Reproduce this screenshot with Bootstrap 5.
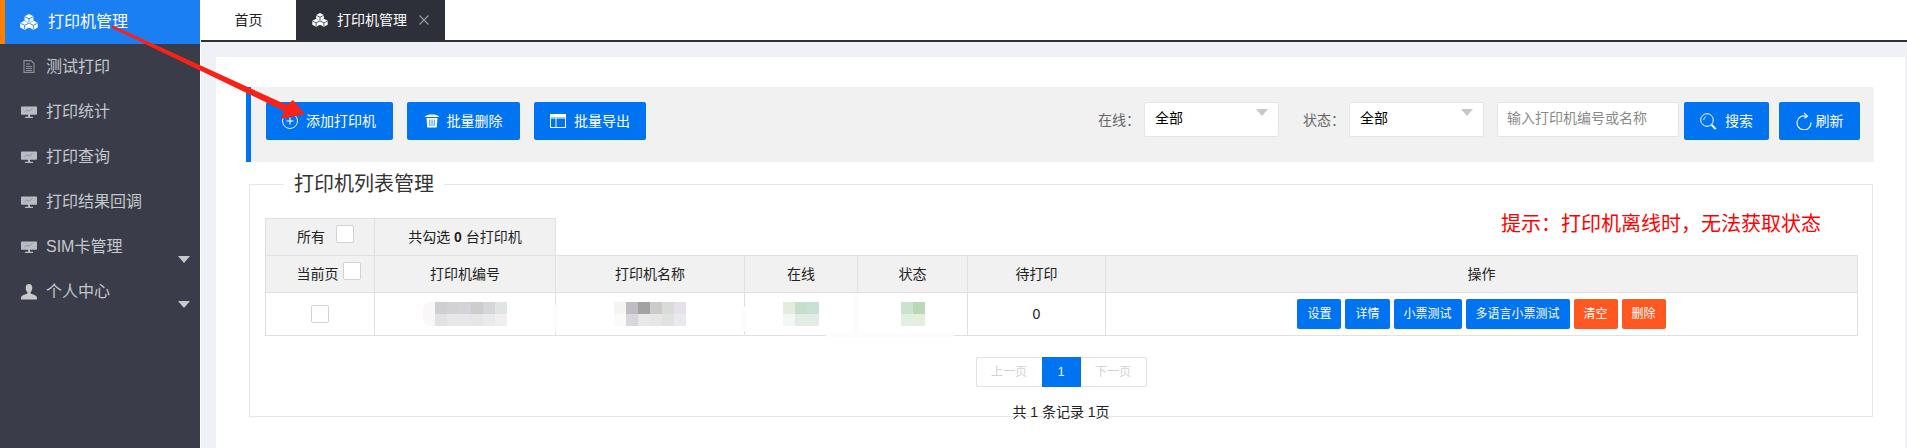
<!DOCTYPE html>
<html lang="zh-CN">
<head>
<meta charset="utf-8">
<title>打印机管理</title>
<link href="https://cdn.jsdelivr.net/npm/bootstrap@5.3.0/dist/css/bootstrap.min.css" rel="stylesheet">
<style>
html,body{height:448px;overflow:hidden}
body{font-family:"Liberation Sans","Noto Sans CJK SC",sans-serif;font-size:14px;color:#222;background:#fff;position:relative}
.shell{height:448px}
.sidebar{width:200px;flex:none;background:#3a3d49}
.side-item{height:45px;padding-left:21px;color:#c4c7cc;font-size:16px;position:relative;text-decoration:none}
.side-item .side-ic{width:16px;margin-right:9px;flex:none}
.side-item.on{height:44px;background:#1a7ff2;color:#fff;border-left:5px solid #ff8000;padding-left:15px}
.side-item.on .side-ic{width:18px;margin-right:10px}
.side-caret{position:absolute;right:10px;top:32px;border-style:solid;border-width:7px 6px 0;border-color:#c9c9c9 transparent transparent}
.mainwrap{min-width:0;border-left:1px solid #fff;background:#f0f1f6}
.tabbar{height:42px;background:#fff;border-bottom:2px solid #2e3039;flex:none}
.tab-item{height:40px;color:#222;text-decoration:none}
.tab-home{width:95px}
.tab-cur{width:149px;background:#2e3039;color:#fff;padding-left:15px}
.tab-close{margin-left:12px;color:#9a9ca3;line-height:0}
.panel-white{background:#fff;margin:15px 2px 0 15px;padding:30px 31px 0 30px;flex:1}
.toolbar{height:75px;background:#f1f1f1;border-left:5px solid #0073f0;padding:15px 14px 0 15px;border-radius:0 2px 2px 0}
.btn-main{height:38px;background:#0073f0;border:0;border-radius:2px;color:#fff;font-size:14px;padding:0;white-space:nowrap}
.btn-main:hover{background:#0073f0;color:#fff}
.btn-add{width:127px}.btn-del{width:113px}.btn-exp{width:112px}.btn-search{width:85px;margin-left:5px}.btn-refresh{width:81px;margin-left:10px}
.filter-label{color:#666;margin-right:5px;width:41px;white-space:nowrap}
.filter-sel.form-select{width:135px;height:35px;padding:0 0 3px 10px;border:1px solid #e6e6e6;border-radius:2px;font-size:14px;color:#000;background-color:#fff;background-position:right 10px top 6px;background-size:12px 7px;background-image:url("data:image/svg+xml,%3Csvg xmlns='http://www.w3.org/2000/svg' viewBox='0 0 12 7'%3E%3Cpath fill='%23c8c8c8' d='M0 0h12L6 7z'/%3E%3C/svg%3E")}
.filter-input.form-control{width:182px;height:35px;margin-left:13px;padding:0 9px 3px;border:1px solid #e6e6e6;border-radius:2px;font-size:14px}
.filter-input::placeholder{color:#8a8a8a}
.frame{border:1px solid #e6e6e6;margin:8px 1px 0 3px;padding:0 15px;height:247px}
.frame legend{float:none;width:auto;margin:0 0 0 19px;padding:0 10px;font-size:20px;line-height:28px;color:#333}
.ptable{table-layout:fixed;width:1592px;margin:20px 0 0;border-collapse:collapse;font-size:14px;text-align:center}
.ptable th,.ptable td{padding:0;border:1px solid #e0e0e0;vertical-align:middle;font-weight:400;color:#222}
.ptable th{background:#f1f1f1}
.ptable .head-row{height:37px}
.ptable .body-row{height:43px}
.ptable td.tip-cell{border-top-color:#fff;border-right-color:#fff;vertical-align:top;text-align:right;padding-right:36px}
.tip-text{display:block;color:#f00;font-size:20px;line-height:20px;margin-top:-5px}
.chk.form-check-input{width:18px;height:18px;margin:0;border:1px solid #d2d2d2;border-radius:2px;flex:none;float:none}
.chk-raise{margin-top:-6px !important}
.hd-sel{gap:11px;padding-left:11px}
.hd-sel2{gap:4px;padding-left:17px}
.mosaic{display:block;margin:0 auto}
.btn-op{height:30px;padding:0 10px;border:0;border-radius:2px;font-size:12px;color:#fff;background:#0073f0;white-space:nowrap}
.btn-op:hover{color:#fff;background:#0073f0}
.btn-op.warn,.btn-op.warn:hover{background:#ff5722}
.pager{margin:21px 0 0}
.pager .page-link{height:30px;line-height:28px;padding:0;font-size:12px;color:#d2d2d2;border-color:#e2e2e2;text-align:center;background:#fff}
.pager .page-item:first-child .page-link{width:67px;border-radius:2px 0 0 2px}
.pager .page-item:last-child .page-link{width:67px;border-radius:0 2px 2px 0}
.pager .page-item.active .page-link{width:39px;background:#0073f0;border-color:#0073f0;color:#fff}
.page-total{margin-top:15px;text-align:center;line-height:20px;color:#222}
.overlay{position:absolute;left:0;top:0;width:1907px;height:448px;pointer-events:none}
</style>
</head>
<body>
<svg width="0" height="0" class="d-block position-absolute">
  <defs>
    <symbol id="i-cubes" viewBox="0 0 18 16">
      <path d="M9 0l4.4 2.3v4.6L9 9.2 4.6 6.9V2.3z M4.6 6.6L9 8.9v4.5l-4.4 2.4L0.2 13.4V8.9z M13.4 6.6l4.4 2.3v4.5l-4.4 2.4L9 13.4V8.9z" fill="currentColor" fill-rule="evenodd"/>
      <path d="M4.6 2.6L9 4.8l4.4-2.2M9 4.8V8 M.4 9.2l4.2 2.1 4.2-2.1M4.6 11.3v3.5M9.2 9.2l4.2 2.1 4.2-2.1M13.4 11.3v3.5" fill="none" stroke="var(--cut)" stroke-width=".9"/>
    </symbol>
    <symbol id="i-screen" viewBox="0 0 16 14">
      <path d="M1 1.5h14c.6 0 1 .4 1 1v6.2c0 .6-.4 1-1 1H9v2h3v1.3H4v-1.3h3v-2H1c-.6 0-1-.4-1-1V2.500c0-.6.4-1 1-1z" fill="#b9bcc2"/>
      <path d="M3.500 7l2.500-2.200 2 1.400 3.500-2.700" fill="none" stroke="#8d9097" stroke-width=".9"/>
    </symbol>
    <symbol id="i-doc" viewBox="0 0 12 13">
      <path d="M1 .6h7l3 3v8.800H1z M3 4h4 M3 6.500h6 M3 8.500h6 M3 10.500h6" fill="none" stroke="#8e919a" stroke-width="1.100"/>
    </symbol>
    <symbol id="i-user" viewBox="0 0 16 16">
      <path d="M8 0c2.200 0 3.300 1.700 3.300 3.900 0 1.900-.8 3.300-1.700 4.200v1.400c2 .8 5.400 1.700 6.200 3.200.2.800.2 1.800.2 2.800H0c0-1 0-2 .2-2.800 .8-1.500 4.200-2.400 6.200-3.200V8.100C5.500 7.200 4.700 5.800 4.700 3.900 4.700 1.700 5.800 0 8 0z" fill="#c9c9c9"/>
    </symbol>
  </defs>
</svg>

<div class="d-flex shell">
  <nav class="sidebar d-flex flex-column">
    <a class="side-item on d-flex align-items-center" href="#"><svg class="side-ic" height="16" style="--cut:#1a7ff2"><use href="#i-cubes"/></svg>打印机管理</a>
    <a class="side-item d-flex align-items-center" href="#"><svg class="side-ic" height="13"><use href="#i-doc"/></svg>测试打印</a>
    <a class="side-item d-flex align-items-center" href="#"><svg class="side-ic" height="14"><use href="#i-screen"/></svg>打印统计</a>
    <a class="side-item d-flex align-items-center" href="#"><svg class="side-ic" height="14"><use href="#i-screen"/></svg>打印查询</a>
    <a class="side-item d-flex align-items-center" href="#"><svg class="side-ic" height="14"><use href="#i-screen"/></svg>打印结果回调</a>
    <a class="side-item d-flex align-items-center" href="#"><svg class="side-ic" height="14"><use href="#i-screen"/></svg>SIM卡管理<span class="side-caret"></span></a>
    <a class="side-item d-flex align-items-center" href="#"><svg class="side-ic" height="16"><use href="#i-user"/></svg>个人中心<span class="side-caret"></span></a>
  </nav>

  <div class="mainwrap flex-grow-1 d-flex flex-column">
    <div class="tabbar d-flex">
      <a class="tab-item tab-home d-flex align-items-center justify-content-center" href="#">首页</a>
      <a class="tab-item tab-cur d-flex align-items-center" href="#">
        <svg width="18" height="14" class="me-2" style="--cut:#2e3039"><use href="#i-cubes"/></svg>打印机管理
        <span class="tab-close"><svg width="10" height="10" viewBox="0 0 10 10"><path d="M.5.500l9 9M9.500.500l-9 9" stroke="#9a9ca3" stroke-width="1.100" fill="none"/></svg></span>
      </a>
    </div>

    <div class="panel-white">
      <div class="toolbar d-flex justify-content-between align-items-start">
        <div class="d-flex gap-2x" style="gap:14px">
          <button class="btn btn-main btn-add d-flex align-items-center ps-3" type="button">
            <svg width="16" height="16" viewBox="0 0 16 16" class="me-2" fill="none" stroke="#fff"><circle cx="8" cy="8" r="7.500" stroke-width=".9"/><path d="M8 4.500v7M4.500 8h7" stroke-width="1.100"/></svg>添加打印机</button>
          <button class="btn btn-main btn-del d-flex align-items-center justify-content-center" type="button">
            <svg width="14" height="14" viewBox="0 0 14 14" class="me-2"><path d="M0 2.300C2 .8 4.500.5 7 .5s5 .3 7 1.800v.7H0z M1.500 4h11l-.8 9.500H2.300z" fill="#fff"/><path d="M4.700 5.500l.2 6.500M7 5.500V12M9.300 5.500L9.100 12" stroke="#0073f0" stroke-width=".8"/></svg>批量删除</button>
          <button class="btn btn-main btn-exp d-flex align-items-center justify-content-center" type="button">
            <svg width="16" height="14" viewBox="0 0 16 14" class="me-2" fill="none" stroke="#fff"><rect x=".5" y=".5" width="15" height="13"/><path d="M.5 4h15M6 4v9.500" stroke-width="1"/><path d="M.5 2h15" stroke-width="2.500"/></svg>批量导出</button>
        </div>
        <div class="d-flex align-items-start">
          <span class="filter-label pt-2">在线：</span>
          <select class="form-select filter-sel" aria-label="在线"><option>全部</option></select>
          <span class="filter-label pt-2" style="margin-left:24px">状态：</span>
          <select class="form-select filter-sel" aria-label="状态"><option>全部</option></select>
          <input class="form-control filter-input" type="text" placeholder="输入打印机编号或名称">
          <button class="btn btn-main btn-search d-flex align-items-center justify-content-center" type="button">
            <svg width="17" height="17" viewBox="0 0 17 17" class="me-2" fill="none" stroke="#fff"><circle cx="7" cy="7" r="6.300" stroke-width="1"/><path d="M3.800 7c0-1.600.8-3 2-3.500" stroke-width=".9"/><path d="M11.500 11.800l4.300 4.300" stroke-width="2"/></svg>搜索</button>
          <button class="btn btn-main btn-refresh d-flex align-items-center justify-content-center" type="button">
            <svg width="16" height="18" viewBox="0 0 16 18" class="me-1" fill="none" stroke="#fff"><path d="M10.300 4.300A7 7 0 1 0 15 10.500" stroke-width="1.100"/><path d="M8 .8l3.500 3.300-3 2.100" stroke-width="1.100"/></svg>刷新</button>
        </div>
      </div>

      <fieldset class="frame">
        <legend>打印机列表管理</legend>
        <table class="table ptable">
          <colgroup><col style="width:109px"><col style="width:181px"><col style="width:189px"><col style="width:113px"><col style="width:110px"><col style="width:138px"><col style="width:752px"></colgroup>
          <tbody>
            <tr class="head-row">
              <th><span class="d-flex align-items-center justify-content-center hd-sel">所有<input class="form-check-input chk chk-raise" type="checkbox" aria-label="所有"></span></th>
              <th>共勾选 <b>0</b> 台打印机</th>
              <td class="tip-cell" colspan="5"><span class="tip-text">提示：打印机离线时，无法获取状态</span></td>
            </tr>
            <tr class="head-row">
              <th><span class="d-flex align-items-center justify-content-center hd-sel2">当前页<input class="form-check-input chk chk-raise" type="checkbox" aria-label="当前页"></span></th>
              <th>打印机编号</th><th>打印机名称</th><th>在线</th><th>状态</th><th>待打印</th><th>操作</th>
            </tr>
            <tr class="body-row">
              <td><input class="form-check-input chk d-block mx-auto" type="checkbox" aria-label="选择"></td>
              <td><svg class="mosaic" width="84" height="24" viewBox="0 0 84 24">
                <path d="M12 0v24H8a8 8 0 0 1-8-8V8a8 8 0 0 1 8-8z" fill="#f9f7f7"/>
                <g shape-rendering="crispEdges">
                <rect x="12" width="12" height="12" fill="#cfcfd3"/><rect x="24" width="12" height="12" fill="#d3d1d4"/><rect x="36" width="12" height="12" fill="#d4d3d9"/><rect x="48" width="12" height="12" fill="#cccdcc"/><rect x="60" width="12" height="12" fill="#d4d6da"/><rect x="72" width="12" height="12" fill="#e0e4e2"/>
                <rect x="12" y="12" width="12" height="12" fill="#e2e2e4"/><rect x="24" y="12" width="12" height="12" fill="#e7e6e8"/><rect x="36" y="12" width="12" height="12" fill="#e7e7ea"/><rect x="48" y="12" width="12" height="12" fill="#e6e6e7"/><rect x="60" y="12" width="12" height="12" fill="#e8eaeb"/><rect x="72" y="12" width="12" height="12" fill="#efefee"/>
                </g></svg></td>
              <td><svg class="mosaic" width="72" height="24" viewBox="0 0 72 24" shape-rendering="crispEdges">
                <rect width="12" height="12" fill="#f5f4f0"/><rect x="12" width="12" height="12" fill="#bfbcc5"/><rect x="24" width="12" height="12" fill="#a3a2a2"/><rect x="36" width="12" height="12" fill="#c9ccca"/><rect x="48" width="12" height="12" fill="#d7dcd9"/><rect x="60" width="12" height="12" fill="#e6e0ea"/>
                <rect y="12" width="12" height="12" fill="#fafaf7"/><rect x="12" y="12" width="12" height="12" fill="#d6d6dc"/><rect x="24" y="12" width="12" height="12" fill="#e9e8e6"/><rect x="36" y="12" width="12" height="12" fill="#e6e6e4"/><rect x="48" y="12" width="12" height="12" fill="#dfe3df"/><rect x="60" y="12" width="12" height="12" fill="#eaeaee"/>
                </svg></td>
              <td><svg class="mosaic" width="36" height="24" viewBox="0 0 36 24" shape-rendering="crispEdges">
                <rect width="12" height="12" fill="#e6ecdd"/><rect x="12" width="12" height="12" fill="#c6dece"/><rect x="24" width="12" height="12" fill="#c9e0d5"/>
                <rect y="12" width="12" height="12" fill="#f3f6f2"/><rect x="12" y="12" width="12" height="12" fill="#e0ece4"/><rect x="24" y="12" width="12" height="12" fill="#e1ece6"/>
                </svg></td>
              <td><svg class="mosaic" width="24" height="24" viewBox="0 0 24 24" shape-rendering="crispEdges">
                <rect width="12" height="12" fill="#cce2d0"/><rect x="12" width="12" height="12" fill="#b8d9b7"/>
                <rect y="12" width="12" height="12" fill="#e1eee2"/><rect x="12" y="12" width="12" height="12" fill="#e3eedd"/>
                </svg></td>
              <td>0</td>
              <td>
                <div class="d-flex justify-content-center gap-1">
                  <button class="btn btn-op" type="button">设置</button>
                  <button class="btn btn-op" type="button">详情</button>
                  <button class="btn btn-op" type="button">小票测试</button>
                  <button class="btn btn-op" type="button">多语言小票测试</button>
                  <button class="btn btn-op warn" type="button">清空</button>
                  <button class="btn btn-op warn" type="button">删除</button>
                </div>
              </td>
            </tr>
          </tbody>
        </table>
        <ul class="pagination pager justify-content-center">
          <li class="page-item disabled"><span class="page-link">上一页</span></li>
          <li class="page-item active"><span class="page-link">1</span></li>
          <li class="page-item disabled"><span class="page-link">下一页</span></li>
        </ul>
        <div class="page-total">共 1 条记录 1页</div>
      </fieldset>
    </div>
  </div>
</div>

<svg class="overlay" viewBox="0 0 1907 448">
  <g fill="#fcfcfc">
    <rect x="553" y="305" width="5" height="27"/>
    <rect x="742" y="307" width="5" height="24"/>
    <rect x="854" y="293" width="5" height="44"/>
    <rect x="826" y="333" width="128" height="4"/>
  </g>
  <path d="M112 25l175 80 6-5 12 14-24 5 3-8L112 28z" fill="#fa2117"/>
</svg>
<script src="https://cdn.jsdelivr.net/npm/bootstrap@5.3.0/dist/js/bootstrap.bundle.min.js"></script>
</body>
</html>
